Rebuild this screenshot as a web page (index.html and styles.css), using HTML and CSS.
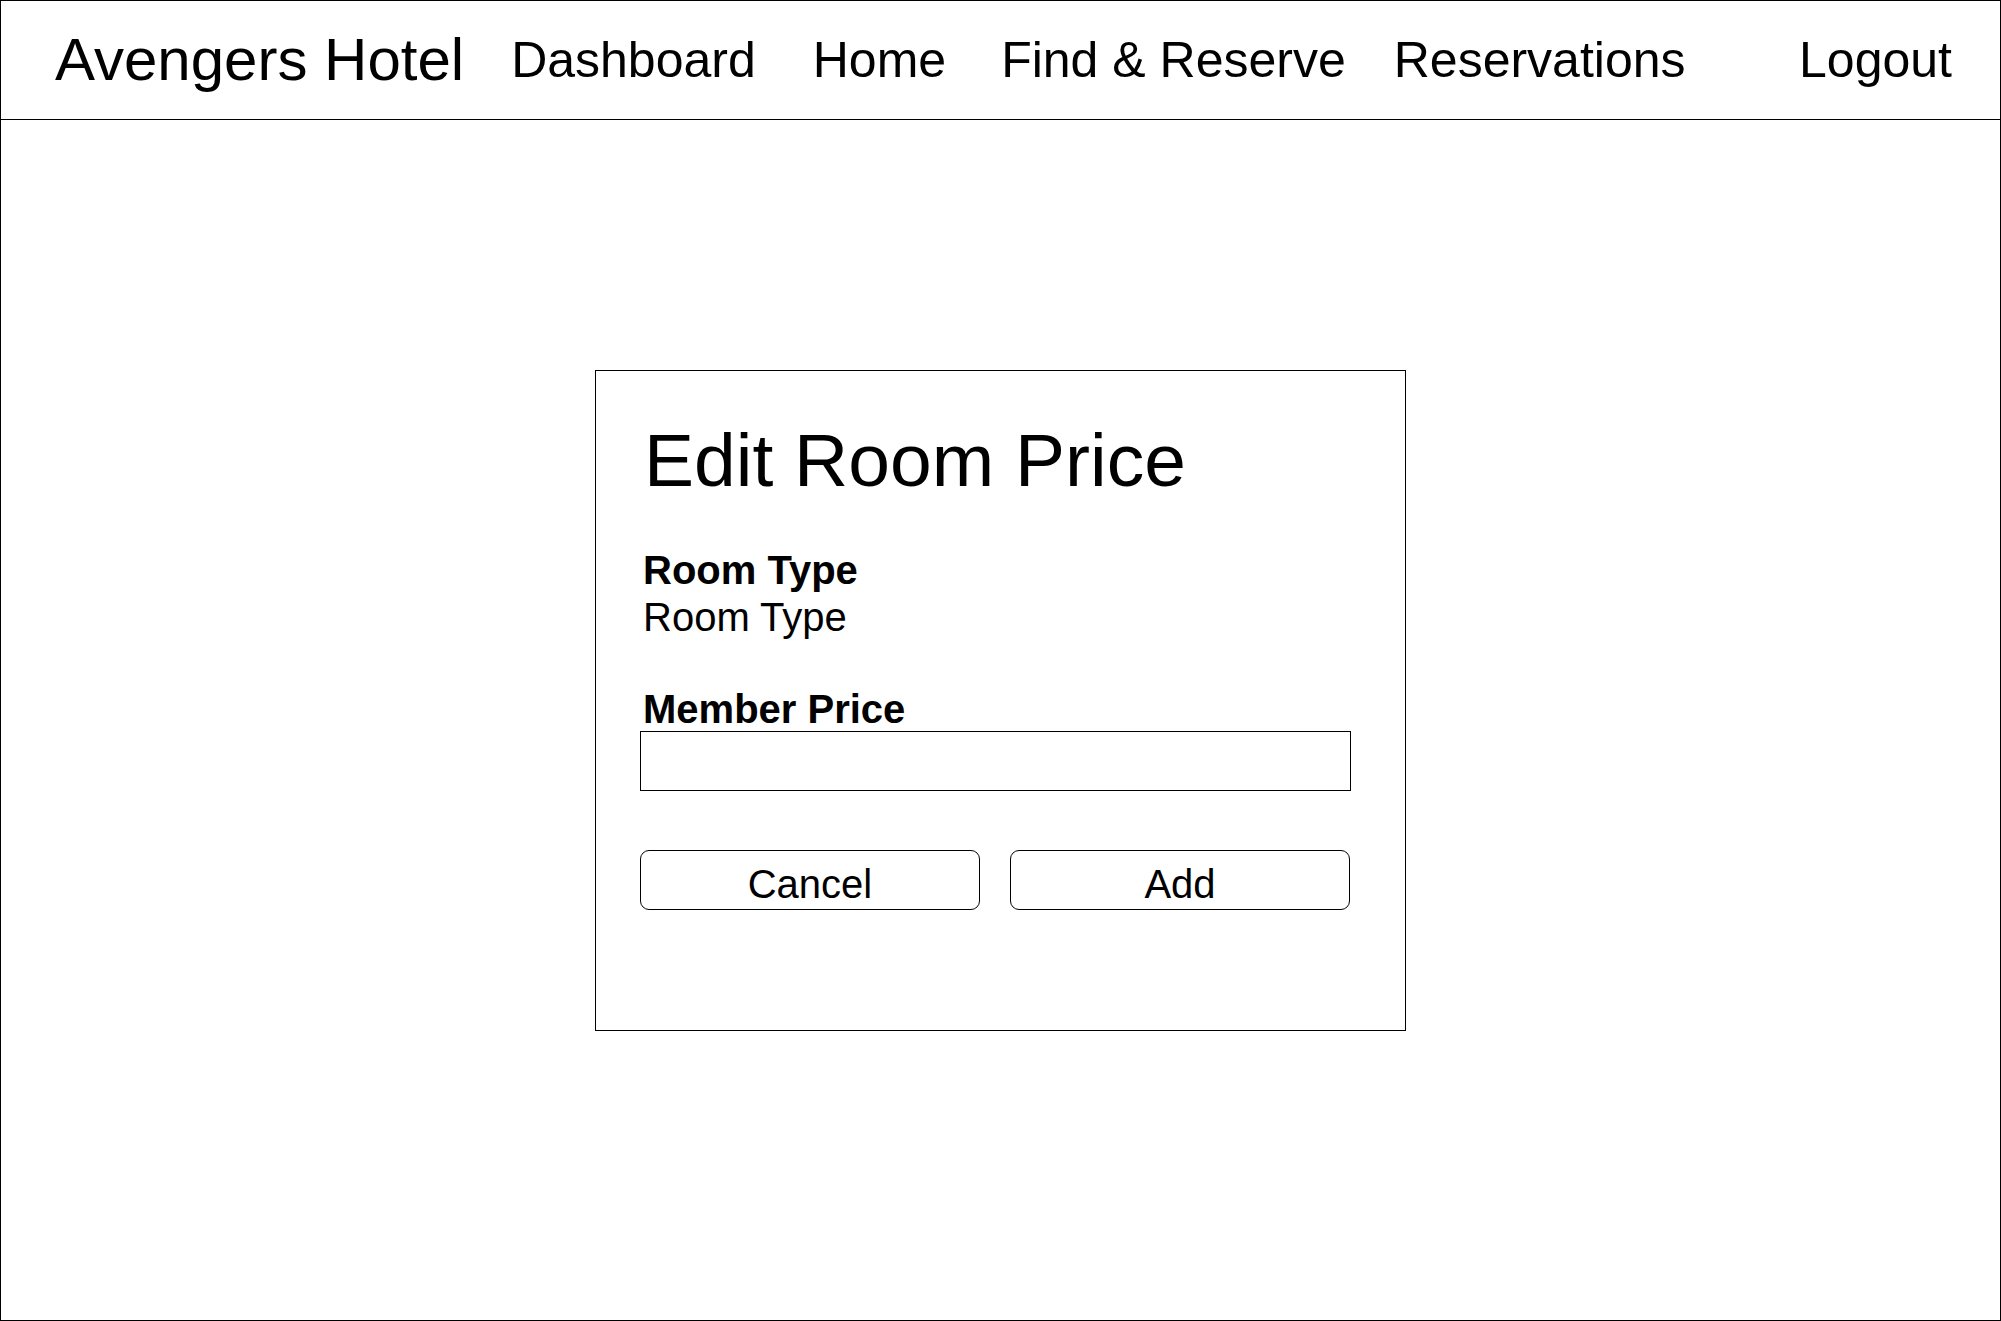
FILE: index.html
```html
<!DOCTYPE html>
<html lang="en">
<head>
<meta charset="utf-8">
<title>Avengers Hotel - Edit Room Price</title>
<link rel="stylesheet" href="styles.css">
</head>
<body>
<div class="frame">
  <nav class="nav">
    <span class="brand">Avengers Hotel</span>
    <a class="nav-link link-dashboard" href="#">Dashboard</a>
    <a class="nav-link link-home" href="#">Home</a>
    <a class="nav-link link-find" href="#">Find &amp; Reserve</a>
    <a class="nav-link link-reservations" href="#">Reservations</a>
    <a class="nav-link link-logout" href="#">Logout</a>
  </nav>
  <main class="main">
    <section class="dialog">
      <h1 class="dialog-title">Edit Room Price</h1>
      <div class="field-label first">Room Type</div>
      <div class="field-value">Room Type</div>
      <label class="field-label price-label" for="price">Member Price</label>
      <input class="price-input" id="price" type="text">
      <div class="actions">
        <button class="btn" type="button">Cancel</button>
        <button class="btn" type="button">Add</button>
      </div>
    </section>
  </main>
</div>
</body>
</html>
```
FILE: styles.css
```css
* { box-sizing: border-box; }
html, body { margin: 0; padding: 0; background: #fff; }
body {
  font-family: "Liberation Sans", Arial, sans-serif;
  color: #000;
}
.frame {
  width: 2001px;
  height: 1321px;
  border: 1px solid #000;
  display: flex;
  flex-direction: column;
}
.nav {
  height: 119px;
  border-bottom: 1px solid #000;
  display: flex;
  align-items: center;
  padding: 0 48px 0 54px;
  flex-shrink: 0;
}
.brand {
  font-size: 60px;
  line-height: 60px;
  white-space: nowrap;
}
.nav-link {
  font-size: 50px;
  line-height: 50px;
  color: #000;
  text-decoration: none;
  white-space: nowrap;
}
.link-dashboard { margin-left: 47px; }
.link-home { margin-left: 57px; }
.link-find { margin-left: 55px; }
.link-reservations { margin-left: 48px; }
.link-logout { margin-left: auto; }

.main {
  flex: 1;
}
.dialog {
  width: 811px;
  height: 661px;
  margin: 250px auto 0;
  border: 1px solid #000;
  padding: 52px 54px 0 44px;
}
.dialog-title {
  margin: 0 0 0 4px;
  font-size: 75px;
  line-height: 75px;
  font-weight: normal;
  white-space: nowrap;
}
.field-label {
  display: block;
  font-size: 40px;
  line-height: 47px;
  font-weight: bold;
  margin-left: 3px;
}
.field-label.first { margin-top: 49px; }
.field-value {
  font-size: 40px;
  line-height: 47px;
  margin-left: 3px;
}
.price-label {
  margin-top: 45px;
  line-height: 44px;
  padding-top: 1px;
}
.price-input {
  display: block;
  width: 100%;
  height: 60px;
  margin: 0;
  padding: 0 10px;
  border: 1px solid #000;
  border-radius: 0;
  background: #fff;
  font-family: inherit;
  font-size: 40px;
  outline: none;
}
.actions {
  display: flex;
  gap: 30px;
  margin-top: 59px;
}
.btn {
  width: 340px;
  height: 60px;
  padding: 7px 0 0;
  margin: 0;
  border: 1px solid #000;
  border-radius: 9px;
  background: #fff;
  color: #000;
  font-family: inherit;
  font-size: 40px;
  line-height: 40px;
}
```
